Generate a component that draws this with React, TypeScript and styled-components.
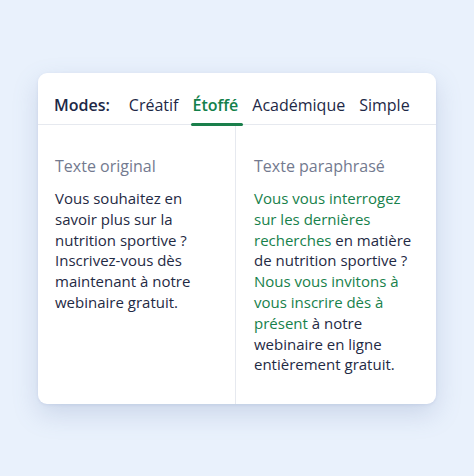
import React from "react";
import styled, { createGlobalStyle } from "styled-components";

const Global = createGlobalStyle`
  html, body { margin: 0; padding: 0; }
  body {
    background: #e9f1fc;
    font-family: "Open Sans", "Noto Sans", sans-serif;
    -webkit-font-smoothing: antialiased;
  }
`;

const Page = styled.div`
  width: 474px;
  height: 476px;
  box-sizing: border-box;
  padding-top: 73px;
  padding-left: 38px;
`;

const Card = styled.div`
  width: 398px;
  height: 331px;
  background: #ffffff;
  border-radius: 9px;
  box-shadow: 0 10px 26px rgba(96, 118, 170, 0.22), 0 1px 3px rgba(96, 118, 170, 0.12);
  display: flex;
  flex-direction: column;
  overflow: hidden;
`;

const TabBar = styled.div`
  display: flex;
  align-items: flex-end;
  height: 52px;
  box-sizing: border-box;
  padding-left: 16px;
  border-bottom: 1px solid #e6e9ef;
`;

const Label = styled.span`
  font-size: 16px;
  font-weight: 600;
  color: #1d2846;
  line-height: 24px;
  padding-bottom: 7px;
  margin-right: 19px;
`;

const Tab = styled.span<{ $active?: boolean }>`
  position: relative;
  font-size: 16px;
  line-height: 24px;
  padding-bottom: 7px;
  margin-right: 14px;
  font-weight: ${(p) => (p.$active ? 600 : 400)};
  color: ${(p) => (p.$active ? "#12804a" : "#1d2846")};
  &::after {
    content: "";
    display: ${(p) => (p.$active ? "block" : "none")};
    position: absolute;
    left: -1px;
    right: -5px;
    bottom: -2px;
    height: 3px;
    border-radius: 2px;
    background: #1a7f4b;
  }
`;

const Columns = styled.div`
  flex: 1;
  display: grid;
  grid-template-columns: 198px 1fr;
`;

const Column = styled.div<{ $divider?: boolean }>`
  padding: 30px 16px 0 ${(p) => (p.$divider ? 17 : 18)}px;
  border-right: ${(p) => (p.$divider ? "1px solid #e6e9ef" : "none")};
`;

const Title = styled.div`
  font-size: 16px;
  line-height: 22px;
  color: #737a8f;
  margin-bottom: 11px;
`;

const Body = styled.p`
  margin: 0;
  font-size: 15px;
  line-height: 20.8px;
  color: #1f2a44;
`;

const Hi = styled.span`
  color: #17814b;
`;

export default function App() {
  return (
    <>
      <Global />
      <Page>
        <Card>
          <TabBar>
            <Label>Modes:</Label>
            <Tab>Créatif</Tab>
            <Tab $active>Étoffé</Tab>
            <Tab>Académique</Tab>
            <Tab>Simple</Tab>
          </TabBar>
          <Columns>
            <Column $divider>
              <Title>Texte original</Title>
              <Body>
                Vous souhaitez en
                <br />
                savoir plus sur la
                <br />
                nutrition sportive ?
                <br />
                Inscrivez-vous dès
                <br />
                maintenant à notre
                <br />
                webinaire gratuit.
              </Body>
            </Column>
            <Column>
              <Title>Texte paraphrasé</Title>
              <Body>
                <Hi>Vous vous interrogez</Hi>
                <br />
                <Hi>sur les dernières</Hi>
                <br />
                <Hi>recherches</Hi> en matière
                <br />
                de nutrition sportive ?
                <br />
                <Hi>Nous vous invitons à</Hi>
                <br />
                <Hi>vous inscrire dès à</Hi>
                <br />
                <Hi>présent</Hi> à notre
                <br />
                webinaire en ligne
                <br />
                entièrement gratuit.
              </Body>
            </Column>
          </Columns>
        </Card>
      </Page>
    </>
  );
}
